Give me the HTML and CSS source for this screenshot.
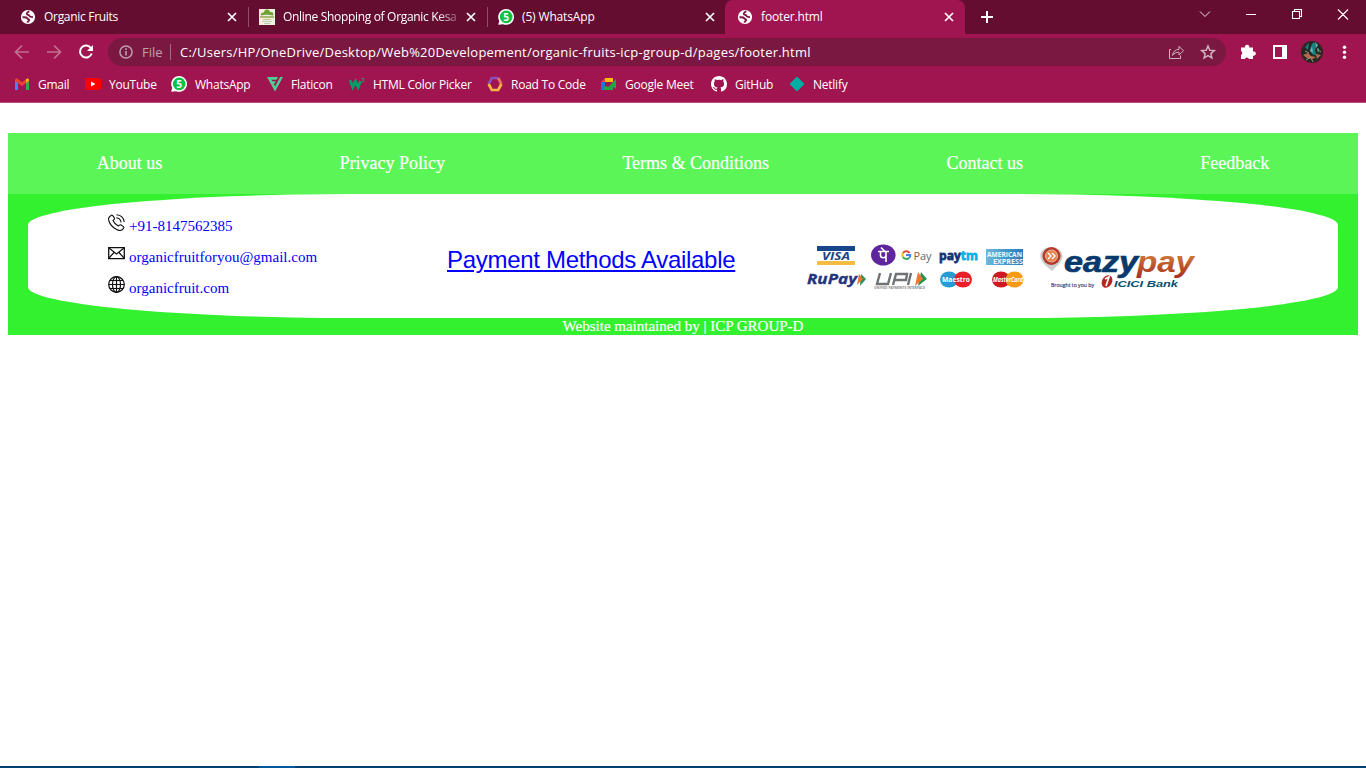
FILE: index.html
```html
<!DOCTYPE html>
<html lang="en">
<head>
<meta charset="utf-8">
<title>footer.html</title>
<link rel="stylesheet" href="styles.css">
</head>
<body>
<svg class="defs" width="0" height="0">
  <symbol id="globe" viewBox="0 0 16 16"><circle cx="8" cy="8" r="7.1" fill="#fff"/><path d="M9.300 2.300C8.200 2.800 6.600 3.600 6.900 5c.3 1.200 2.200.6 2.500 1.800.3 1 1.500 1.300 3.600 1.300M2.500 8.300c1.800-.2 4-.2 4.700.9.600 1.100 2 .6 1.900 1.900-.1 1-1.400 1.200-1.700 2.500" fill="none" stroke="#7b1841" stroke-width="1.900"/></symbol>
  <symbol id="close" viewBox="0 0 10 10"><path d="M1 1l8 8M9 1l-8 8" stroke="#fff" stroke-width="1.700"/></symbol>
</svg>

<header class="tabs">
  <div class="tab t1"><svg class="fav"><use href="#globe"/></svg><span class="title">Organic Fruits</span><svg class="x"><use href="#close"/></svg></div>
  <div class="tab t2"><svg class="fav" viewBox="0 0 16 16"><path fill="#eef0e0" d="M0 0h16v16H0z"/><path fill="#6ca332" d="M2 6.500C1 4 4 3 5 3.500 5-.5 11-.3 11 3c3-.3 4 1.500 3 3.500-3-1-9-1-12 0z"/><path fill="#a7bd75" d="M1 7h14v2H1z"/><path fill="#cdbf8a" d="M4 10h8v1H4z"/><path fill="#b9cdb0" d="M3 12h10v1H3zM5 14h6v1H5z"/></svg><span class="title fade">Online Shopping of Organic Kesa</span><svg class="x"><use href="#close"/></svg></div>
  <div class="tab t3"><svg class="fav" viewBox="0 0 16 16"><path d="M.3 15.800l.9-4A7.900 7.900 0 1 1 5 15.200z" fill="#fff"/><circle cx="8.200" cy="7.900" r="6.300" fill="#0dc143"/><text class="five" x="5.300" y="11.500">5</text></svg><span class="title">(5) WhatsApp</span><svg class="x"><use href="#close"/></svg></div>
  <div class="tab t4"><svg class="fav"><use href="#globe"/></svg><span class="title">footer.html</span><svg class="x"><use href="#close"/></svg></div>
  <svg class="plus" viewBox="0 0 12 12"><path d="M6 0v12M0 6h12" stroke="#fff" stroke-width="2"/></svg>
  <svg class="window" viewBox="1196 0 156 34" fill="none" stroke="#fff"><path d="M1200 11.500l5 5 5-5" stroke="#eee0e6"/><path d="M1246 14.500h10M1292.500 11.500h7v7h-7zM1294.500 11.500v-2h7v7h-2M1338 9.500l10 10M1348 9.500l-10 10" stroke-width="1.100"/></svg>
</header>

<div class="toolbar">
  <svg class="navs" viewBox="14 42 82 20" fill="none" stroke-width="1.700"><path d="M29 52H16M22 45.500L15.500 52l6.500 6.500M47 52h13M54 45.500l6.500 6.500-6.500 6.500" stroke="#c46f94"/><path d="M91 48.200A6 6 0 1 0 91.700 53.500" stroke="#fff" stroke-width="2"/><path d="M93 45v6h-6z" fill="#fff"/></svg>
  <div class="address">
    <svg class="info" viewBox="0 0 14 14"><circle cx="7" cy="7" r="6.100" fill="none" stroke="#c0a0b0" stroke-width="1.500"/><path d="M7 6v4.500M7 3.300v1.600" stroke="#c0a0b0" stroke-width="1.600"/></svg>
    <span class="file">File</span><span class="url">C:/Users/HP/OneDrive/Desktop/Web%20Developement/organic-fruits-icp-group-d/pages/footer.html</span>
    <svg class="share" viewBox="1168 44 50 16" fill="none" stroke="#cfb1bf"><path d="M1171 49.500h-1.500v9h11v-3"/><path d="M1172.500 55.500c.5-4 3-6 6.500-6.200v-3l4.500 4.500-4.500 4.200v-2.800c-3 0-5 1-6.500 3.300z"/><path d="M1208 46l1.800 4.200 4.500.4-3.400 3 1 4.400-3.900-2.300-3.900 2.300 1-4.400-3.400-3 4.500-.4z" stroke-width="1.500"/></svg>
  </div>
  <svg class="tools" viewBox="1236 38 118 28"><path fill="#fff" d="M1241 47.500h4a2.200 2.200 0 1 1 4.200 0h3.800v4a2.200 2.200 0 1 1 0 4.200V59h-4a2.200 2.200 0 0 0-4.200 0h-3.800v-4a2.200 2.200 0 0 0 0-4z"/><path fill="#fff" fill-rule="evenodd" d="M1273 45h14v14h-14zm2 2v10h7V47z"/><circle cx="1312" cy="52" r="11" fill="#292724"/><path fill="#168080" d="M1312 44l2-2 2 4-1 5 2 5-5-2-2-4zM1305 47l4-4-1 7z"/><path fill="#65b7ad" d="M1315 42l3 3-2 3zM1310 51l2-5 1 7zM1317 48l2 1-1 4z"/><path fill="#b26b4b" d="M1303 55l5-2 3 3 5 1-3 2-6-1zM1316 54l5 1-4 4z"/><path d="M1305 51l4 2M1306 60l5-3M1318 50l3 2M1311 58l2 4" stroke="#9b9a7b"/><g fill="#fff"><circle cx="1344.500" cy="47.300" r="1.700"/><circle cx="1344.500" cy="52.300" r="1.700"/><circle cx="1344.500" cy="57.300" r="1.700"/></g></svg>
</div>

<nav class="bookmarks">
  <a><svg viewBox="0 0 16 16"><path fill="#4285f4" d="M1 4.500l3 2.200V14H1z"/><path fill="#34a853" d="M12 6.700l3-2.200V14h-3z"/><path fill="#ea4335" d="M1 4c0-1.500 1.500-2 2.500-1.200L8 6.300l4.500-3.500C13.500 2 15 2.500 15 4v1L8 10 1 5z"/><path fill="#fbbc04" d="M12 3.200c2-1.400 3-.2 3 1.300l-3 2.400z"/></svg>Gmail</a>
  <a><svg viewBox="0 0 16 16"><rect y="2" width="16" height="12" rx="3" fill="#f00"/><path fill="#fff" d="M6 5.500v5L10.500 8z"/></svg>YouTube</a>
  <a><svg viewBox="0 0 16 16"><path d="M.3 15.800l.9-4A7.900 7.900 0 1 1 5 15.200z" fill="#fff"/><circle cx="8.200" cy="7.900" r="6.300" fill="#0dc143"/><text class="five" x="5.300" y="11.500">5</text></svg>WhatsApp</a>
  <a><svg viewBox="0 0 16 16"><path fill="#4ad295" d="M0 1h11L9.500 3.800H4.500l.9 1.500h3.300L7.300 8H6.800l1.300 2.600L13.200 1H16L8 15.500z"/></svg>Flaticon</a>
  <a><svg viewBox="0 0 16 16"><path d="M1 4l2.700 7L6.500 5.500 9.100 11l2.600-6" fill="none" stroke="#049b68" stroke-width="3"/><path d="M12.500 2.500h2.700l-1.500 1.700c2 .2 1.700 2.300-.9 1.800" fill="none" stroke="#527c6e"/></svg>HTML Color Picker</a>
  <a><svg viewBox="0 0 16 16" fill="none" stroke-width="2.700"><path d="M1.600 8l3.200-6h6.400" stroke="#8750bd"/><path d="M11.200 2l3.200 6" stroke="#e27365"/><path d="M14.400 8l-3.200 6H4.800L1.600 8" stroke="#f4b642"/></svg>Road To Code</a>
  <a><svg viewBox="0 0 16 16"><path fill="#1677ed" d="M0 6h4v8H0z"/><path fill="#ea4335" d="M0 6l4-4v4z"/><path fill="#fbbc04" d="M4 2h8v4H4z"/><path fill="#21a647" d="M3 10.500h5L12 6v8H3zM11 7l4-4v10l-4-3z"/></svg>Google Meet</a>
  <a><svg viewBox="0 0 16 16"><path fill="#fff" d="M8 0C3.580 0 0 3.580 0 8c0 3.540 2.290 6.530 5.470 7.590.4.070.55-.17.55-.38v-1.500c-2.010.37-2.530-.49-2.690-.94-.09-.23-.48-.94-.82-1.130-.28-.15-.68-.52-.01-.53.63-.01 1.080.58 1.230.82.72 1.210 1.870.87 2.330.66.070-.52.28-.87.51-1.070-1.780-.2-3.640-.89-3.640-3.950 0-.87.31-1.590.82-2.150-.08-.2-.36-1.020.08-2.120 0 0 .67-.21 2.200.82A7.600 7.600 0 0 1 8 3.860c.68 0 1.360.09 2 .27 1.530-1.040 2.200-.82 2.200-.82.44 1.100.16 1.920.08 2.120.51.56.82 1.270.82 2.150 0 3.070-1.870 3.750-3.650 3.950.29.25.54.73.54 1.480v2.200c0 .21.15.46.55.38A8 8 0 0 0 16 8c0-4.420-3.580-8-8-8z"/></svg>GitHub</a>
  <a><svg viewBox="0 0 16 16"><path fill="#00ada2" d="M8 .5L15.500 8 8 15.500.5 8z"/></svg>Netlify</a>
</nav>

<main>
  <footer>
    <nav class="links"><a>About us</a><a>Privacy Policy</a><a>Terms &amp; Conditions</a><a>Contact us</a><a>Feedback</a></nav>
    <section class="panel">
      <div class="contacts">
        <a><svg viewBox="0 0 17 17" fill="none" stroke="#111" stroke-width="1.100"><path d="M1 3.500L3 1.400q1-.6 1.700.3l1.700 2.200q.5 1-.4 1.700L5 6.500c1 2.300 3 4.500 5.300 5.500l1-.9q.9-.7 1.800-.1l2.200 1.600q1 .8.200 1.700c-1.700 2.300-4.300 2.600-6.800 1.300C4.800 13.500 2 10.500.9 7 .4 5.500.3 4.500 1 3.500zM8.300 3.700c2.700.3 4.400 2 4.800 4.700M8.500.7c4.300.3 7.200 3 7.800 7.300"/></svg><span>+91-8147562385</span></a>
        <a><svg viewBox="0 0 17 17" fill="none" stroke="#111"><path d="M.7 2.600h15.600v11H.7z" stroke-width="1.300"/><path d="M1 3l7.500 6L16 3M1 13l5-5.500M16 13l-5-5.500" stroke-width="1.200"/></svg><span>organicfruitforyou@gmail.com</span></a>
        <a><svg viewBox="0 0 17 17" fill="none" stroke="#111" stroke-width="1.200"><circle cx="8.500" cy="8.500" r="7.800"/><ellipse cx="8.500" cy="8.500" rx="4" ry="7.800"/><path d="M8.500.7v15.600M.7 8.500h15.600M2 4.500h13M2 12.500h13"/></svg><span>organicfruit.com</span></a>
      </div>
      <a class="methods">Payment Methods Available</a>
      <svg class="payments" viewBox="800 238 410 60">
        <defs><linearGradient id="pay" x2="0" y2="1"><stop stop-color="#e39542"/><stop offset="1" stop-color="#a52f20"/></linearGradient><linearGradient id="amex"><stop stop-color="#69b9e0"/><stop offset="1" stop-color="#257eb6"/></linearGradient></defs>
        <path fill="#17468d" d="M817 246h38v5h-38z"/><path fill="#f5bc42" d="M817 261h38v4h-38z"/>
        <text class="logo it" x="822" y="259.500" font-size="10.500" fill="#24427f" textLength="28" lengthAdjust="spacingAndGlyphs">VISA</text>
        <ellipse cx="883.300" cy="255" rx="12.300" ry="10.600" fill="#5f259f"/><path d="M878 251.500h11M881 247.500l4 4M880.500 251.500v4c0 3 5.500 3 5.500 0M886 251.500v10.500" fill="none" stroke="#fff" stroke-width="1.600"/>
        <g fill="none" stroke-width="2"><path d="M909.500 253a4 4 0 0 0-6.500 0" stroke="#ea4335"/><path d="M903 253a4 4 0 0 0 0 4" stroke="#fbbc04"/><path d="M903 257a4 4 0 0 0 6 1" stroke="#34a853"/><path d="M909 258q1.500-1 1.300-3H906" stroke="#4285f4"/></g>
        <text x="913.500" y="259.500" font-family="Open Sans, sans-serif" font-size="11.500" fill="#666" textLength="18" lengthAdjust="spacingAndGlyphs">Pay</text>
        <text class="logo" x="939" y="260" font-size="13" fill="#123475" stroke="#123475" stroke-width=".8" textLength="39" lengthAdjust="spacingAndGlyphs">pay<tspan fill="#08aee5" stroke="#08aee5">tm</tspan></text>
        <path fill="url(#amex)" d="M986 249h37v16h-37z"/><g class="logo" font-size="6.500" fill="#eef9fd"><text x="987" y="256.500" textLength="35" lengthAdjust="spacingAndGlyphs">AMERICAN</text><text x="993" y="263.500" textLength="30" lengthAdjust="spacingAndGlyphs">EXPRESS</text></g>
        <text class="logo it" x="807" y="284" font-size="14" fill="#23337f" stroke="#23337f" stroke-width=".3" textLength="50" lengthAdjust="spacingAndGlyphs">RuPay</text><path fill="#269253" d="M861 274l5 5-6 7z"/><path fill="#f27432" d="M859 274l4 5-6 6z"/>
        <path d="M880 273l-3 11h11l3-11M893 285l3-11h11l-1 6h-11M911 273l-3 12" fill="none" stroke="#707375" stroke-width="2.400"/><path fill="#269253" d="M921 272l6 7-9 7z"/><path fill="#f27432" d="M918 272l5 7-8 7z"/><text x="874" y="288.800" class="logo" font-size="3.500" fill="#888" textLength="51" lengthAdjust="spacingAndGlyphs">UNIFIED PAYMENTS INTERFACE</text>
        <ellipse cx="949" cy="279.500" rx="9" ry="8" fill="#299bd3"/><ellipse cx="963" cy="279.500" rx="9" ry="8" fill="#ec1f27"/><text class="logo" x="942" y="282" font-size="7" fill="#fff" textLength="28" lengthAdjust="spacingAndGlyphs">Maestro</text>
        <ellipse cx="1001" cy="279.500" rx="9" ry="8" fill="#cf1820"/><ellipse cx="1014.500" cy="279.500" rx="9" ry="8" fill="#f69a17"/><text class="logo it" x="993" y="282" font-size="7" fill="#fff" textLength="30" lengthAdjust="spacingAndGlyphs">MasterCard</text>
        <path fill="#ccc" d="M1040.500 257c-2-13 23-13 22 0-1 6-6 9-10.500 14-5.500-5-10.500-8-11.500-14z"/><circle cx="1051.500" cy="256" r="9" fill="#b33b28"/><circle cx="1051.500" cy="256" r="6" fill="#e68350" stroke="#edbaa0"/><path d="M1048 253l3 3-3 3M1052 253l3 3-3 3" fill="none" stroke="#fff" stroke-width="1.400"/>
        <text class="arial it" x="1064" y="272" font-size="30" fill="#07396c" stroke="#07396c" stroke-width=".7" textLength="74" lengthAdjust="spacingAndGlyphs">eazy</text><text class="arial it" x="1137" y="272" font-size="30" fill="url(#pay)" textLength="57" lengthAdjust="spacingAndGlyphs">pay</text>
        <text x="1051" y="286.500" font-family="Open Sans, sans-serif" font-size="5.500" fill="#42427d" stroke="#42427d" stroke-width=".2" textLength="43" lengthAdjust="spacingAndGlyphs">Brought to you by</text><ellipse cx="1107" cy="281.500" rx="5" ry="6.500" transform="rotate(30 1107 281.500)" fill="#b32922"/><path d="M1105 279l4-2-3 9" fill="none" stroke="#fff" stroke-width="1.700"/><text class="arial it" x="1114" y="287" font-size="9" fill="#07506f" textLength="64" lengthAdjust="spacingAndGlyphs">ICICI Bank</text>
      </svg>
    </section>
    <p>Website maintained by | ICP GROUP-D</p>
  </footer>
</main>
<div class="edge"></div>
</body>
</html>
```

FILE: styles.css
```css
* { box-sizing: border-box; }
body { margin: 0; height: 768px; display: flex; flex-direction: column; overflow: hidden; background: #fff; font: 12px "Open Sans", sans-serif; color: #fff; }
svg { display: block; flex: none; }
.defs { position: absolute; }
.five { font: 700 10px "Open Sans", sans-serif; fill: #fff; }
.tabs { height: 34px; display: flex; background: #640d31; }
.tab { display: flex; align-items: center; height: 34px; letter-spacing: -.26px; }
.t1 { width: 248px; padding: 0 11px 0 20px; }
.t2 { width: 239px; padding: 0 11px; }
.t3 { width: 238px; padding: 0 10px 0 11px; }
.t4 { width: 240px; padding: 0 11px 0 12px; background: #a0154f; border-radius: 8px 8px 0 0; }
.t2, .t3 { background: linear-gradient(#914d6c, #914d6c) left center / 1px 20px no-repeat; }
.t3, .t4 { letter-spacing: -.15px; }
.fav { width: 16px; height: 16px; margin-right: 8px; }
.title { flex: 1; white-space: nowrap; margin-top: -1px; }
.t1 .title { letter-spacing: -.3px; }
.fade { letter-spacing: -.32px; -webkit-mask-image: linear-gradient(90deg, #000 84%, transparent 100%); }
.x { width: 10px; height: 10px; }
.plus { width: 12px; height: 12px; margin: 11px 0 0 16px; }
.window { width: 156px; height: 34px; margin: 0 14px 0 auto; }
.toolbar { height: 34px; padding-top: 4px; display: flex; background: #a0154f; }
.navs { width: 82px; height: 20px; margin: 4px 12px 0 14px; }
.address { width: 1118px; height: 28px; border-radius: 14px; background: #7b1841; display: flex; align-items: center; padding: 0 8px 0 11px; font-size: 13px; }
.info { width: 14px; height: 14px; }
.file { margin-left: 9px; width: 29px; height: 16px; line-height: 16px; border-right: 1px solid #a66b86; color: #c0a0b0; }
.url { margin-left: 9px; white-space: nowrap; letter-spacing: .225px; }
.share { width: 50px; height: 16px; margin-left: auto; }
.tools { width: 118px; height: 28px; margin-left: 10px; }
.bookmarks { height: 35px; background: #a0154f; border-bottom: 1px solid #b9517e; display: grid; grid-template-columns: 71px 86px 96px 82px 138px 114px 110px 78px 80px; padding: 0 0 2px 14px; align-items: center; }
.bookmarks a { display: flex; align-items: center; gap: 8px; white-space: nowrap; letter-spacing: -.24px; }
.bookmarks svg { width: 16px; height: 16px; }
main { flex: 1; padding: 30px 8px 0; font-family: "Liberation Serif", serif; }
footer { background: #33f12f; height: 202px; }
.links { height: 61px; background: #5bf558; display: flex; justify-content: space-around; align-items: center; font-size: 18px; -webkit-text-stroke: .2px #fff; }
.panel { height: 124px; margin: 0 20px; border-radius: 25%; background: #fff; display: flex; align-items: center; color: #00f; }
.contacts { width: 339px; margin-left: 80px; padding-top: 1px; font-size: 15px; }
.contacts a { display: flex; align-items: center; height: 31px; gap: 4px; }
.contacts svg { width: 17px; height: 17px; margin-top: -7px; }
.contacts span { margin-top: 2px; }
.methods { width: 353px; margin-top: 8px; font: 24px "Liberation Sans", sans-serif; letter-spacing: -.3px; text-decoration: underline; }
.payments { width: 410px; height: 60px; margin-top: 24px; }
.logo { font-family: "Open Sans", sans-serif; font-weight: 700; }
.arial { font-family: "Liberation Sans", sans-serif; font-weight: 700; }
.it { font-style: italic; }
footer p { margin: 0; text-align: center; font-size: 15px; line-height: 17px; -webkit-text-stroke: .2px #fff; }
.edge { height: 2px; background: linear-gradient(90deg, #00416f 259px, #00599a 259px 295px, #00416f 295px); }
```
